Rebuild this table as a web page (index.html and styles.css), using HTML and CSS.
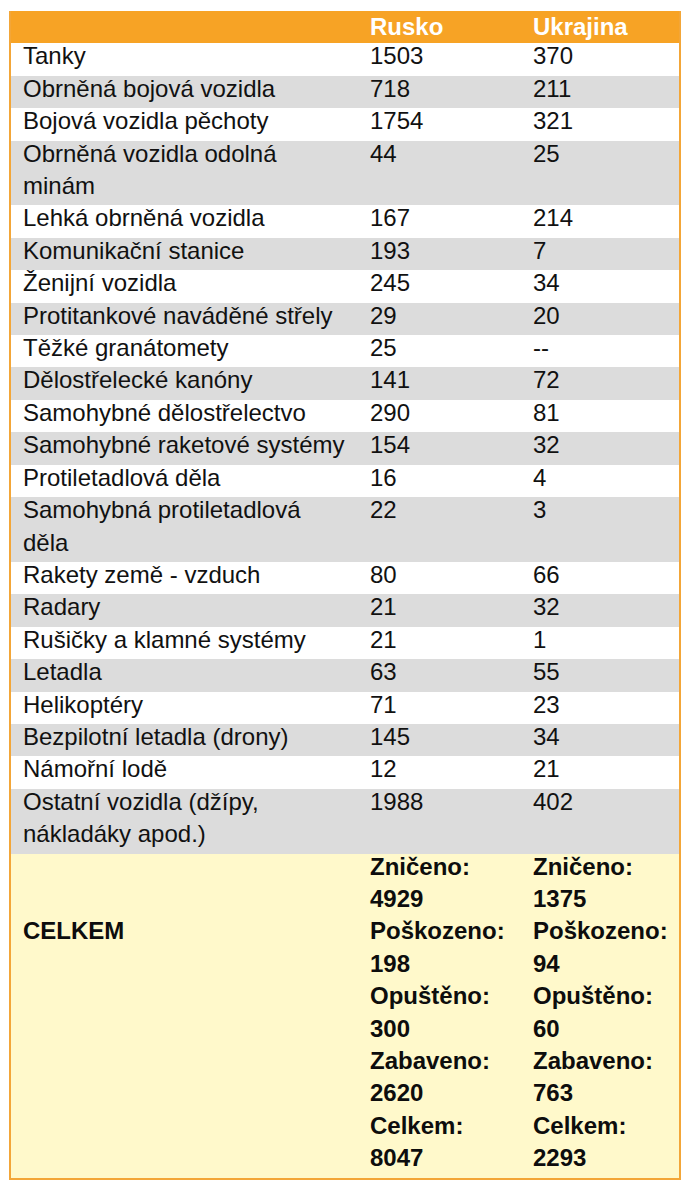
FILE: index.html
```html
<!DOCTYPE html>
<html lang="cs">
<head>
<meta charset="utf-8">
<title>Ztráty techniky</title>
<link rel="stylesheet" href="styles.css">
</head>
<body>
<table class="losses">
  <colgroup>
    <col class="c-name">
    <col class="c-ru">
    <col class="c-ua">
  </colgroup>
  <thead>
    <tr class="head"><th></th><th>Rusko</th><th>Ukrajina</th></tr>
  </thead>
  <tbody>
    <tr><td>Tanky</td><td>1503</td><td>370</td></tr>
    <tr class="alt"><td>Obrněná bojová vozidla</td><td>718</td><td>211</td></tr>
    <tr><td>Bojová vozidla pěchoty</td><td>1754</td><td>321</td></tr>
    <tr class="alt"><td>Obrněná vozidla odolná<br>minám</td><td>44</td><td>25</td></tr>
    <tr><td>Lehká obrněná vozidla</td><td>167</td><td>214</td></tr>
    <tr class="alt"><td>Komunikační stanice</td><td>193</td><td>7</td></tr>
    <tr><td>Ženijní vozidla</td><td>245</td><td>34</td></tr>
    <tr class="alt"><td>Protitankové naváděné střely</td><td>29</td><td>20</td></tr>
    <tr><td>Těžké granátomety</td><td>25</td><td>--</td></tr>
    <tr class="alt"><td>Dělostřelecké kanóny</td><td>141</td><td>72</td></tr>
    <tr><td>Samohybné dělostřelectvo</td><td>290</td><td>81</td></tr>
    <tr class="alt"><td>Samohybné raketové systémy</td><td>154</td><td>32</td></tr>
    <tr><td>Protiletadlová děla</td><td>16</td><td>4</td></tr>
    <tr class="alt"><td>Samohybná protiletadlová<br>děla</td><td>22</td><td>3</td></tr>
    <tr><td>Rakety země - vzduch</td><td>80</td><td>66</td></tr>
    <tr class="alt"><td>Radary</td><td>21</td><td>32</td></tr>
    <tr><td>Rušičky a klamné systémy</td><td>21</td><td>1</td></tr>
    <tr class="alt"><td>Letadla</td><td>63</td><td>55</td></tr>
    <tr><td>Helikoptéry</td><td>71</td><td>23</td></tr>
    <tr class="alt"><td>Bezpilotní letadla (drony)</td><td>145</td><td>34</td></tr>
    <tr><td>Námořní lodě</td><td>12</td><td>21</td></tr>
    <tr class="alt"><td>Ostatní vozidla (džípy,<br>nákladáky apod.)</td><td>1988</td><td>402</td></tr>
  </tbody>
  <tfoot>
    <tr class="total">
      <td class="total-label">CELKEM</td>
      <td>Zničeno:<br>4929<br>Poškozeno:<br>198<br>Opuštěno:<br>300<br>Zabaveno:<br>2620<br>Celkem:<br>8047</td>
      <td>Zničeno:<br>1375<br>Poškozeno:<br>94<br>Opuštěno:<br>60<br>Zabaveno:<br>763<br>Celkem:<br>2293</td>
    </tr>
  </tfoot>
</table>
</body>
</html>
```

FILE: styles.css
```css
html, body {
  margin: 0;
  padding: 0;
  background: #ffffff;
}

body {
  padding: 11px 0 0 9px;
  font-family: "Liberation Sans", Arial, sans-serif;
  color: #111111;
}

.losses {
  width: 672px;
  table-layout: fixed;
  border-collapse: separate;
  border-spacing: 0;
  border: 2px solid #f3a638;
  border-top: 0;
  font-size: 24px;
  line-height: 32.4px;
}

.c-name { width: 347px; }
.c-ru { width: 163px; }
.c-ua { width: 158px; }

.losses th,
.losses td {
  padding: 0 0 0 12px;
  text-align: left;
  vertical-align: top;
  font-weight: normal;
  white-space: nowrap;
}

/* lift the text slightly within each line box, keeping row heights */
.losses td {
  padding-bottom: 3px;
}

.losses td::before {
  content: "";
  display: block;
  margin-top: -3px;
}

.head th {
  background: #f7a325;
  color: #ffffff;
  font-weight: bold;
}

.alt td {
  background: #dcdcdc;
}

.total td {
  background: #fff9cb;
  font-weight: bold;
  color: #0d0d0d;
}

.total td.total-label {
  padding-top: 64.8px;
}
```
